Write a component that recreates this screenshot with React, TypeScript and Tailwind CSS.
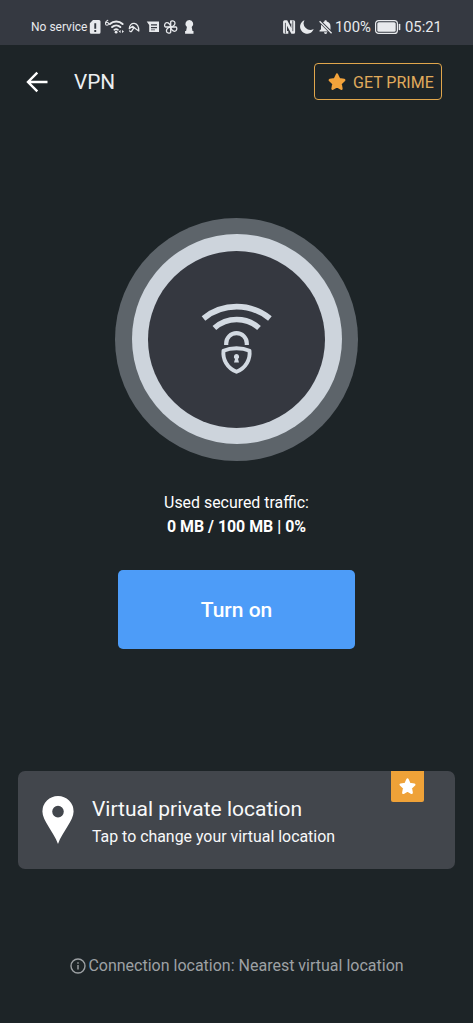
import React from 'react';

interface IconProps {
  className?: string;
}

const STAR_PATH =
  'M12 3.200l2.600 5.600 6 .8-4.400 4.300 1.100 6.100L12 17.100l-5.300 2.900 1.100-6.100-4.400-4.300 6-.8z';

const StarIcon = ({ className }: IconProps): JSX.Element => (
  <svg
    viewBox="0 0 24 24"
    className={className}
    fill="currentColor"
    stroke="currentColor"
    strokeWidth="3"
    strokeLinejoin="round"
  >
    <path d={STAR_PATH} />
  </svg>
);

const LeftStatusIcons = (): JSX.Element => (
  <svg
    viewBox="88 16 110 22"
    className="h-[22px] w-[110px] shrink-0"
    fill="#e8eaed"
  >
    {/* sim alert */}
    <path
      fillRule="evenodd"
      d="M93 20H99a1.500 1.500 0 0 1 1.500 1.500V32.300a1.500 1.500 0 0 1-1.500 1.500H91.300a1.500 1.500 0 0 1-1.500-1.500V23.200zM94.300 23.300V28.700H96.200V23.300zM94.300 30V31.900H96.200V30z"
    />
    {/* wifi 6 */}
    <g fill="none" stroke="#e8eaed" strokeLinecap="round">
      <path d="M107.800 20.200c-1.600.6-2.300 1.800-2.300 3.200" strokeWidth="1.100" />
      <circle cx="107" cy="23.800" r="1.500" strokeWidth="1.100" />
      <path d="M109.900 24a9.500 9.500 0 0 1 12.700 0" strokeWidth="2" />
      <path d="M112.100 27a6.200 6.200 0 0 1 8.200 0" strokeWidth="2" />
      <path d="M114.300 29.800a3 3 0 0 1 3.700 0" strokeWidth="1.700" />
    </g>
    <circle cx="116.100" cy="32.200" r="1.400" />
    <path d="M118.600 31.500l2-1.600v3.200zM124 31.500l-2-1.600v3.200z" />
    {/* umbrella */}
    <g
      fill="none"
      stroke="#e8eaed"
      strokeWidth="1.300"
      strokeLinecap="round"
      strokeLinejoin="round"
    >
      <path d="M129.300 28.700c.1-3.600 2.300-5.600 5-5.300 2.900.4 4.500 3.600 4.500 7.600l-3.200-2.200-3-2.500z" />
      <path d="M134 27.700l-2.300 3.400c-.6.9-1.900.6-2-.3" />
    </g>
    {/* message */}
    <path
      fillRule="evenodd"
      d="M146.700 21.500H159V32H149.200V25zM151 24.200V25.500H157V24.200zM151 27V28.300H157V27zM151 29.500V30.300H155V29.500z"
    />
    {/* fan */}
    <g fill="none" stroke="#e8eaed" strokeWidth="1.300" strokeLinejoin="round">
      <path d="M170.700 27v-5.200c0-1.400 4.300-1.300 4.300 1.200 0 2-2 4-4.300 4z" />
      <path d="M170.700 27h5.200c1.400 0 1.300 4.300-1.200 4.300-2 0-4-2-4-4.300z" />
      <path d="M170.700 27v5.200c0 1.400-4.300 1.300-4.300-1.200 0-2 2-4 4.300-4z" />
      <path d="M170.700 27h-5.200c-1.400 0-1.300-4.300 1.200-4.300 2 0 4 2 4 4.300z" />
    </g>
    {/* keyhole */}
    <path d="M189.300 20a3.900 3.900 0 0 1 2.400 7l.8 4h1v2.800h-8.400V31h1l.8-4a3.900 3.900 0 0 1 2.400-7z" />
  </svg>
);

const RightStatusIcons = (): JSX.Element => (
  <svg
    viewBox="283 16 52 22"
    className="h-[22px] w-[52px] shrink-0"
    fill="#e8eaed"
  >
    {/* nfc */}
    <path d="M284.600 20.300H287.200L291.300 28V23.500H290V20.300H293.600a1.500 1.500 0 0 1 1.500 1.500V32.300a1.500 1.500 0 0 1-1.500 1.500H291.400L287 25.800V31H288.300V33.800H284.600a1.500 1.500 0 0 1-1.500-1.500V21.800a1.500 1.500 0 0 1 1.500-1.500z" />
    <path
      d="M285.400 33.500V22.800M292.800 20.600V31.200"
      stroke="#353941"
      strokeWidth=".8"
    />
    {/* moon */}
    <path d="M304.500 20.200a7 7 0 1 0 9.200 8.800 6.600 6.600 0 0 1-9.200-8.800z" />
    {/* muted bell */}
    <path d="M325.600 20.300c.8 0 1.200.5 1.200 1.300 2.500.6 3.700 2.400 3.700 4.800v3.400l-7.400-7.400c.4-.4.8-.6 1.300-.8 0-.8.4-1.300 1.200-1.300zM321.200 24.700l6.700 6.800h-8.400v-.9l1.500-1.400v-2.800c0-.6 0-1.200.2-1.700zM324 32.300h3.200a1.600 1.600 0 0 1-3.200 0z" />
    <path
      d="M319.600 21.200L331.600 33.200"
      stroke="#e8eaed"
      strokeWidth="1.300"
    />
  </svg>
);

const BatteryIcon = (): JSX.Element => (
  <svg viewBox="0 0 26 14" className="h-[14px] w-[26px] shrink-0">
    <rect
      x=".6"
      y=".6"
      width="21.800"
      height="12.800"
      rx="3"
      fill="none"
      stroke="#e8eaed"
      strokeWidth="1.200"
    />
    <rect
      x="2.300"
      y="2.300"
      width="18.400"
      height="9.400"
      rx="1.500"
      fill="#e8eaed"
    />
    <path
      d="M24.500 4.500v5"
      stroke="#e8eaed"
      strokeWidth="1.600"
      strokeLinecap="round"
    />
  </svg>
);

const SecureWifiIcon = (): JSX.Element => (
  <svg
    viewBox="0 0 100 95"
    className="-mt-[3px] mr-[2px] h-[95px] w-[100px] shrink-0"
    fill="none"
    stroke="#d3dae2"
  >
    <path d="M17.500 28.400a53 53 0 0 1 66.400 0" strokeWidth="5.800" />
    <path d="M28.400 38a33.600 33.600 0 0 1 44.600 0" strokeWidth="5.600" />
    <path
      d="M40.200 54.900v-1.500a10.300 10.300 0 0 1 20.600 0v1.500"
      strokeWidth="4.200"
    />
    <path
      d="M50.500 58.300c4.800 0 9.300.8 13 2.400 1 8.500-3.500 17.200-13 21.100-9.500-3.900-14-12.600-13-21.100 3.700-1.600 8.200-2.400 13-2.400z"
      strokeWidth="3.900"
      strokeLinejoin="round"
    />
    <path
      d="M50.500 64a2.700 2.700 0 0 1 1.500 4.900l1 3.500h-5l1-3.500a2.700 2.700 0 0 1 1.500-4.900z"
      fill="#d3dae2"
      stroke="none"
    />
  </svg>
);

const StatusBar = (): JSX.Element => (
  <div className="flex h-[45px] shrink-0 items-center bg-[#353941] pt-[9px] pl-[31px] text-[#e8eaed]">
    <span className="w-[57px] text-[12px] leading-[22px] whitespace-nowrap">
      No service
    </span>
    <LeftStatusIcons />
    <div className="ml-auto flex items-center pr-[31px]">
      <RightStatusIcons />
      <span className="w-[40px] text-[14.800px] leading-[22px] whitespace-nowrap">
        100%
      </span>
      <BatteryIcon />
      <span className="ml-1 w-[37px] text-[14.800px] leading-[22px] whitespace-nowrap">
        05:21
      </span>
    </div>
  </div>
);

const Header = (): JSX.Element => (
  <header className="flex h-[73px] shrink-0 items-center pr-[31px] pl-[26px]">
    <button type="button" aria-label="Back">
      <svg
        viewBox="0 0 22 22"
        className="h-[22px] w-[22px]"
        fill="none"
        stroke="#fff"
        strokeWidth="2.400"
      >
        <path d="M21.500 11H2.200M11.300 1.600L2 11l9.300 9.400" />
      </svg>
    </button>
    <h1 className="ml-[26px] pt-px text-[20.800px] leading-6 text-[#eceff1]">
      VPN
    </h1>
    <button
      type="button"
      className="ml-auto flex h-[37px] w-[128px] items-center rounded-[4px] border border-[#e0a64c] pl-[12px] text-[#e0ab5c]"
    >
      <StarIcon className="mr-[6px] h-[20px] w-[20px] shrink-0 text-[#f3a33b]" />
      <span className="pt-[2px] text-[16px] whitespace-nowrap">GET PRIME</span>
    </button>
  </header>
);

const LocationCard = (): JSX.Element => (
  <button
    type="button"
    className="relative mx-[18px] mt-[122px] flex h-[98px] shrink-0 items-center rounded-[7px] bg-[#42464c] pl-[24px] text-left"
  >
    <svg viewBox="0 0 32 48" className="h-[48px] w-[32px] shrink-0" fill="#fff">
      <path
        fillRule="evenodd"
        d="M16 0a15.600 15.600 0 0 1 15.600 15.600C31.600 25 20.500 35.500 16 48 11.500 35.500.4 25 .4 15.600A15.600 15.600 0 0 1 16 0zm0 9.800a5.800 5.800 0 1 0 0 11.600 5.800 5.800 0 0 0 0-11.600z"
      />
    </svg>
    <div className="ml-[18px] pt-[6px] whitespace-nowrap text-[#f8f9fa]">
      <p className="text-[21px] leading-7">Virtual private location</p>
      <p className="text-[15.900px] leading-7">
        Tap to change your virtual location
      </p>
    </div>
    <span className="absolute top-0 right-[31px] flex h-[31px] w-[33px] items-center justify-center rounded-b-[2px] bg-[#efa238]">
      <StarIcon className="h-[19px] w-[19px] text-white" />
    </span>
  </button>
);

const App = (): JSX.Element => (
  <div className="flex h-[1023px] w-[473px] flex-col overflow-hidden bg-[#1d2427] font-['Roboto',sans-serif]">
    <StatusBar />
    <Header />

    <div className="mx-auto mt-[99.500px] flex size-[243px] shrink-0 items-center justify-center rounded-full bg-[#5d646a]">
      <div className="flex size-[210px] items-center justify-center rounded-full bg-[#cdd4dc]">
        <div className="flex size-[177px] items-center justify-center rounded-full bg-[#353840]">
          <SecureWifiIcon />
        </div>
      </div>
    </div>

    <div className="mt-[30.500px] text-center text-[15.900px] leading-6 text-white">
      <p>Used secured traffic:</p>
      <p className="font-bold">0 MB / 100 MB | 0%</p>
    </div>

    <button
      type="button"
      className="mx-auto mt-[31px] h-[79px] w-[237px] shrink-0 rounded-[5px] bg-[#4d9cf8] pt-[2px] text-[21px] font-medium text-white"
    >
      Turn on
    </button>

    <LocationCard />

    <p className="mt-[85px] flex items-center justify-center text-[16px] leading-6 whitespace-nowrap text-[#9da1a4]">
      <svg
        viewBox="0 0 16 16"
        className="mr-[2px] ml-px h-[16px] w-[16px]"
        fill="none"
        stroke="currentColor"
        strokeWidth="1.400"
      >
        <circle cx="8" cy="8" r="7" />
        <path d="M8 7v4.500M8 4.300v1.500" />
      </svg>
      Connection location: Nearest virtual location
    </p>
  </div>
);

export default App;
